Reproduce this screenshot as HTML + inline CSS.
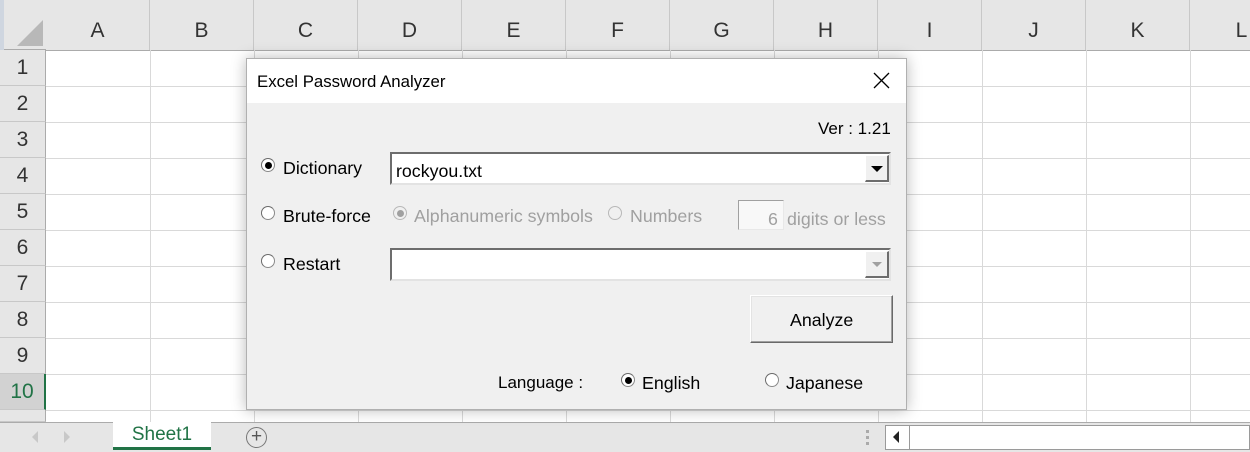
<!DOCTYPE html>
<html><head><meta charset="utf-8"><style>
*{box-sizing:border-box;margin:0;padding:0}
body{width:1250px;height:452px;overflow:hidden;background:#fff;font-family:"Liberation Sans",sans-serif;position:relative}
.a{position:absolute}
.ch{position:absolute;top:0;height:50px;border-right:1px solid #c8c8c8;text-align:center;font-size:21px;color:#333;padding-top:19px;background:#e6e6e6}
.rh{position:absolute;left:0;width:46px;height:36px;border-bottom:1px solid #c8c8c8;text-align:center;font-size:21px;color:#333;padding-top:6px;background:#e6e6e6;border-right:1px solid #ababab}
.vl{position:absolute;top:50px;width:1px;height:372px;background:#d9d9d9}
.hl{position:absolute;left:46px;height:1px;width:1204px;background:#d9d9d9}
.t{position:absolute;font-size:17.8px;color:#000;white-space:nowrap}
.g{color:#a0a0a0}
.r{position:absolute;width:14px;height:14px;border-radius:50%;background:#fff;border:1px solid #8a8a8a;border-top-color:#6a6a6a;border-left-color:#6a6a6a}
.r.on::after{content:"";position:absolute;left:2.5px;top:2.5px;width:7px;height:7px;border-radius:50%;background:#000}
.r.dis{background:#f0f0f0;border-color:#b8b8b8}
.r.dis.on::after{background:#a0a0a0}
.box{position:absolute;background:#fff;border:2px solid;border-color:#6d6d6d #e3e3e3 #e3e3e3 #6d6d6d}
</style></head><body>
<div class="a" style="left:0;top:0;width:1250px;height:50px;background:#e6e6e6;border-bottom:1px solid #ababab"></div>
<div class="a" style="left:0;top:0;width:4px;height:422px;background:#cfd6e0"></div>
<div class="a" style="left:17px;top:20px;width:0;height:0;border-left:26px solid transparent;border-bottom:26px solid #b8b8b8"></div>
<div class="ch" style="left:46px;width:104px">A</div>
<div class="ch" style="left:150px;width:104px">B</div>
<div class="ch" style="left:254px;width:104px">C</div>
<div class="ch" style="left:358px;width:104px">D</div>
<div class="ch" style="left:462px;width:104px">E</div>
<div class="ch" style="left:566px;width:104px">F</div>
<div class="ch" style="left:670px;width:104px">G</div>
<div class="ch" style="left:774px;width:104px">H</div>
<div class="ch" style="left:878px;width:104px">I</div>
<div class="ch" style="left:982px;width:104px">J</div>
<div class="ch" style="left:1086px;width:104px">K</div>
<div class="ch" style="left:1190px;width:104px">L</div>
<div class="a" style="left:0;top:50px;width:1250px;height:1px;background:#ababab"></div>
<div class="rh" style="top:50px">1</div>
<div class="rh" style="top:86px">2</div>
<div class="rh" style="top:122px">3</div>
<div class="rh" style="top:158px">4</div>
<div class="rh" style="top:194px">5</div>
<div class="rh" style="top:230px">6</div>
<div class="rh" style="top:266px">7</div>
<div class="rh" style="top:302px">8</div>
<div class="rh" style="top:338px">9</div>
<div class="rh" style="top:374px;background:#d2d2d2;color:#217346;border-right:2px solid #217346">10</div>
<div class="rh" style="top:410px;height:12px"></div>
<div class="vl" style="left:150px"></div><div class="vl" style="left:254px"></div><div class="vl" style="left:358px"></div><div class="vl" style="left:462px"></div><div class="vl" style="left:566px"></div><div class="vl" style="left:670px"></div><div class="vl" style="left:774px"></div><div class="vl" style="left:878px"></div><div class="vl" style="left:982px"></div><div class="vl" style="left:1086px"></div><div class="vl" style="left:1190px"></div>
<div class="hl" style="top:86px"></div><div class="hl" style="top:122px"></div><div class="hl" style="top:158px"></div><div class="hl" style="top:194px"></div><div class="hl" style="top:230px"></div><div class="hl" style="top:266px"></div><div class="hl" style="top:302px"></div><div class="hl" style="top:338px"></div><div class="hl" style="top:374px"></div><div class="hl" style="top:410px"></div>
<div class="a" style="left:0;top:422px;width:1250px;height:30px;background:#e6e6e6;border-top:1px solid #ababab"></div>
<div class="a" style="left:32px;top:431px;border-right:6px solid #c8c8c8;border-top:6px solid transparent;border-bottom:6px solid transparent"></div>
<div class="a" style="left:64px;top:431px;border-left:6px solid #c8c8c8;border-top:6px solid transparent;border-bottom:6px solid transparent"></div>
<div class="a" style="left:113px;top:422px;width:98px;height:28px;background:#fff;border-bottom:3px solid #217346;color:#217346;font-size:19px;text-align:center;padding-top:2px">Sheet1</div>
<div class="a" style="left:246px;top:427px;width:21px;height:21px;border:1.5px solid #777;border-radius:50%;color:#555;font-size:19px;line-height:17px;text-align:center">+</div>
<div class="a" style="left:866px;top:430px;width:3px;height:3px;background:#aaa;box-shadow:0 6px #aaa,0 12px #aaa"></div>
<div class="a" style="left:885px;top:425px;width:365px;height:25px;background:#fff;border:1px solid #9a9a9a"></div>
<div class="a" style="left:909px;top:425px;width:1px;height:25px;background:#9a9a9a"></div>
<div class="a" style="left:893px;top:431px;border-right:6px solid #222;border-top:6px solid transparent;border-bottom:6px solid transparent"></div>
<div class="a" style="left:246px;top:58px;width:661px;height:352px;background:#f0f0f0;border:1px solid #b0b0b0;box-shadow:0 0 14px rgba(0,0,0,.28)"></div>
<div class="a" style="left:247px;top:59px;width:659px;height:44px;background:#fff"></div>
<div class="t" style="left:257px;top:72px;font-size:16.8px">Excel Password Analyzer</div>
<svg class="a" style="left:873px;top:72px" width="17" height="17"><path d="M1 1L16 16M16 1L1 16" stroke="#000" stroke-width="1.3"/></svg>
<div class="t" style="left:818px;top:119px;font-size:17px">Ver : 1.21</div>
<div class="r on" style="left:261px;top:158px"></div>
<div class="t" style="left:283px;top:158px">Dictionary</div>
<div class="box" style="left:390px;top:152px;width:501px;height:33px"></div>
<div class="t" style="left:396px;top:161px">rockyou.txt</div>
<div class="a" style="left:865px;top:155px;width:24px;height:27px;background:#f0f0f0;border-right:2px solid #6d6d6d;border-bottom:2px solid #6d6d6d;border-top:1px solid #fff;border-left:1px solid #fff"></div>
<div class="a" style="left:871px;top:166px;border-top:6px solid #000;border-left:6px solid transparent;border-right:6px solid transparent"></div>
<div class="r" style="left:261px;top:206px"></div>
<div class="t" style="left:283px;top:206px">Brute-force</div>
<div class="r dis on" style="left:393px;top:206px"></div>
<div class="t g" style="left:414px;top:206px">Alphanumeric symbols</div>
<div class="r dis" style="left:608px;top:206px"></div>
<div class="t g" style="left:630px;top:206px">Numbers</div>
<div class="a" style="left:738px;top:200px;width:46px;height:30px;background:#f8f8f8;border:1px solid;border-color:#a0a0a0 #e8e8e8 #e8e8e8 #a0a0a0"></div>
<div class="t g" style="left:768px;top:209px">6</div>
<div class="t g" style="left:787px;top:209px">digits or less</div>
<div class="r" style="left:261px;top:254px"></div>
<div class="t" style="left:283px;top:254px">Restart</div>
<div class="box" style="left:390px;top:248px;width:501px;height:33px"></div>
<div class="a" style="left:865px;top:251px;width:24px;height:27px;background:#f0f0f0;border-right:2px solid #6d6d6d;border-bottom:2px solid #6d6d6d;border-top:1px solid #fff;border-left:1px solid #fff"></div>
<div class="a" style="left:872px;top:262px;border-top:5px solid #a0a0a0;border-left:5px solid transparent;border-right:5px solid transparent"></div>
<div class="a" style="left:750px;top:295px;width:143px;height:48px;background:#f0f0f0;border:1px solid;border-color:#fff #696969 #696969 #fff;box-shadow:inset -1px -1px #a0a0a0,inset 1px 1px #e3e3e3"></div>
<div class="t" style="left:790px;top:310px">Analyze</div>
<div class="t" style="left:498px;top:373px;font-size:17px">Language :</div>
<div class="r on" style="left:621px;top:373px"></div>
<div class="t" style="left:642px;top:373px">English</div>
<div class="r" style="left:765px;top:373px"></div>
<div class="t" style="left:786px;top:373px">Japanese</div>
</body></html>
